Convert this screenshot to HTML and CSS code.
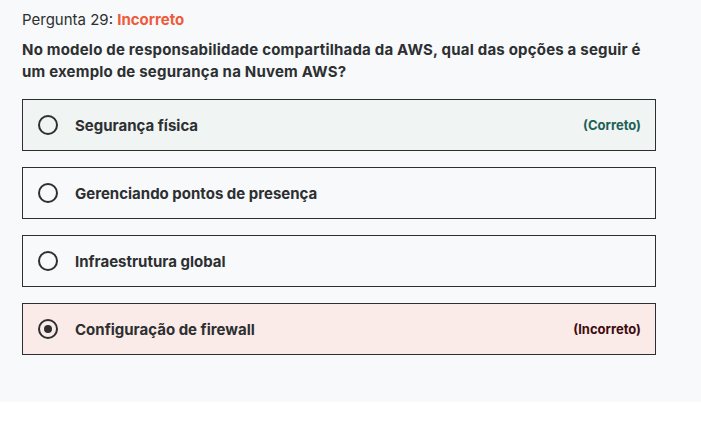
FILE: index.html
```html
<!DOCTYPE html>
<html lang="pt">
<head>
<meta charset="utf-8">
<link rel="stylesheet" href="styles.css">
</head>
<body>
<main class="panel">
  <div class="title">Pergunta 29: <span class="status">Incorreto</span></div>
  <div class="question">No modelo de responsabilidade compartilhada da AWS, qual das opções a seguir é um exemplo de segurança na Nuvem AWS?</div>
  <ul class="options">
    <li class="option correct">
      <span class="radio"></span>
      <span class="label">Segurança física</span>
      <span class="tag">(Correto)</span>
    </li>
    <li class="option">
      <span class="radio"></span>
      <span class="label">Gerenciando pontos de presença</span>
    </li>
    <li class="option">
      <span class="radio"></span>
      <span class="label">Infraestrutura global</span>
    </li>
    <li class="option wrong">
      <span class="radio checked"></span>
      <span class="label">Configuração de firewall</span>
      <span class="tag">(Incorreto)</span>
    </li>
  </ul>
</main>
</body>
</html>
```
FILE: styles.css
```css
html, body {
  margin: 0;
  padding: 0;
  background: #ffffff;
}
body {
  font-family: "Inter", "Noto Sans", sans-serif;
  color: #2d2f31;
}
.panel {
  background: #f7f9fa;
  height: 402px;
  box-sizing: border-box;
  padding: 9px 0 0 22px;
}
.title {
  font-size: 15px;
  line-height: 22px;
  color: #2d2f31;
}
.status {
  color: #f05a3c;
  font-weight: 700;
}
.question {
  width: 632px;
  margin-top: 8px;
  font-size: 15px;
  font-weight: 700;
  line-height: 22px;
  letter-spacing: 0.2px;
}
.options {
  list-style: none;
  margin: 16px 0 0 0;
  padding: 0;
  width: 634px;
  display: flex;
  flex-direction: column;
  gap: 16px;
}
.option {
  box-sizing: border-box;
  height: 52px;
  border: 1px solid #2d2f31;
  display: flex;
  align-items: center;
  padding: 0 14px 0 15px;
}
.option.correct { background: #f0f4f3; }
.option.wrong { background: #fbebe8; }
.radio {
  box-sizing: border-box;
  width: 20px;
  height: 20px;
  border: 2px solid #2d2f31;
  border-radius: 50%;
  margin-right: 17px;
  display: flex;
  align-items: center;
  justify-content: center;
  flex: none;
}
.radio.checked::after {
  content: "";
  width: 8px;
  height: 8px;
  border-radius: 50%;
  background: #2d2f31;
}
.label {
  font-size: 15px;
  font-weight: 700;
  flex: 1;
}
.tag {
  font-size: 13px;
  font-weight: 700;
}
.correct .tag { color: #1e6055; }
.wrong .tag { color: #3d0c11; }
```
